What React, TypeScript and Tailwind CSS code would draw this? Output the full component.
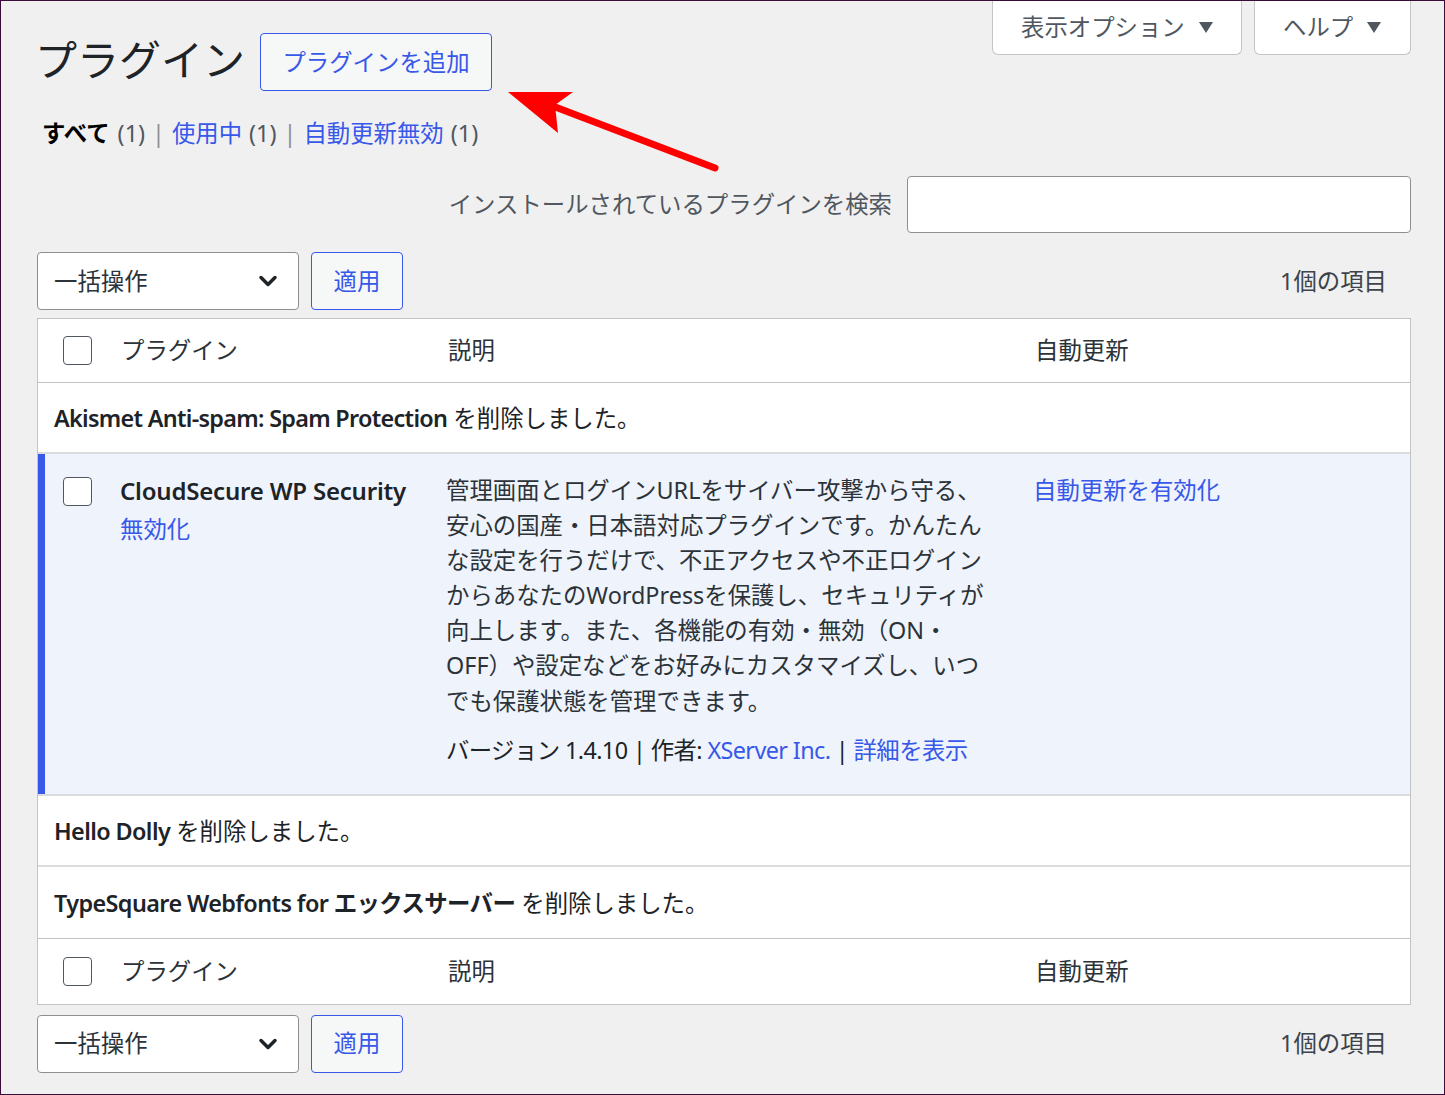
import { ChevronDown } from "lucide-react"

const blue = "text-[#3858e9]"

function Caret() {
  return (
    <svg width="14" height="11" viewBox="0 0 14 11" className="shrink-0">
      <path d="M0 0 H14 L7 11 Z" fill="#50575e" />
    </svg>
  )
}

function Checkbox() {
  return <span className="block h-[29px] w-[29px] rounded-[4px] border border-[#50575e] bg-white" />
}

function BulkBar() {
  return (
    <div className="flex items-center justify-between">
      <div className="flex items-center gap-[12px]">
        <div className="flex h-[58px] w-[262px] items-center justify-between rounded-[4px] border border-[#8c8f94] bg-white pl-[16px] pr-[16px] text-[#2c3338]">
          <span>一括操作</span>
          <ChevronDown size={28} strokeWidth={3} className="text-[#1d2327]" />
        </div>
        <button
          type="button"
          className={`h-[58px] w-[92px] rounded-[4px] border border-[#3858e9] bg-[#f6f7f7] ${blue}`}
        >
          適用
        </button>
      </div>
      <span className="pr-[24px] text-[#3c434a]">1個の項目</span>
    </div>
  )
}

function HeadRow({ bottom }: { bottom?: boolean }) {
  return (
    <div
      className={`grid h-[64px] grid-cols-[83px_327px_587px_1fr] items-center text-[#2c3338] ${
        bottom ? "h-[65px]" : "border-b border-[#c3c4c7]"
      }`}
    >
      <div className="pl-[25px]">
        <Checkbox />
      </div>
      <span>プラグイン</span>
      <span>説明</span>
      <span>自動更新</span>
    </div>
  )
}

function Deleted({ children, last }: { children: React.ReactNode; last?: boolean }) {
  return (
    <div
      className={`flex items-center px-[16px] text-[#1d2327] ${
        last ? "h-[72px] border-b border-[#c3c4c7]" : "h-[71px] border-b-2 border-[#dcdcde]"
      }`}
    >
      <p className="pt-[2px]">{children}</p>
    </div>
  )
}

export default function App() {
  return (
    <div className="relative h-[1095px] w-[1445px] overflow-hidden border border-[#3b0b3b] bg-[#f0f0f1] font-['Noto_Sans','Noto_Sans_CJK_JP',sans-serif] text-[23.4px] leading-[35px]">
      {/* annotation arrow */}
      <svg
        width="230"
        height="100"
        viewBox="0 0 230 100"
        className="pointer-events-none absolute left-[499px] top-[79px]"
      >
        <polygon points="8,12 73,12 55,25 58,53" fill="#ff0000" />
        <line x1="50" y1="25" x2="215" y2="88" stroke="#ff0000" strokeWidth="7" strokeLinecap="round" />
      </svg>

      <div className="pl-[36px] pr-[33px]">
        {/* header */}
        <div className="flex items-start justify-between">
          <div className="flex items-center gap-[15px] pt-[32px]">
            <h1 className="-mt-[4px] -ml-[2px] text-[42px] leading-[54px] text-[#1d2327]">プラグイン</h1>
            <button
              type="button"
              className={`h-[58px] w-[232px] rounded-[4px] border border-[#3858e9] bg-[#f6f7f7] ${blue}`}
            >
              プラグインを追加
            </button>
          </div>
          <div className="flex gap-[12px] text-[#50575e]">
            <div className="flex h-[54px] w-[250px] items-center gap-[14px] rounded-b-[6px] border-x border-b border-[#c3c4c7] bg-white pl-[28px]">
              表示オプション
              <Caret />
            </div>
            <div className="flex h-[54px] w-[157px] items-center gap-[14px] rounded-b-[6px] border-x border-b border-[#c3c4c7] bg-white pl-[28px]">
              ヘルプ
              <Caret />
            </div>
          </div>
        </div>

        {/* filters */}
        <div className="mt-[25px] flex items-center pl-[5px]">
          <span className="font-bold text-black">すべて</span>
          <span className="ml-[8px] text-[#50575e]">(1)</span>
          <span className="mx-[7px] text-[#8c8f94]">|</span>
          <span className={blue}>使用中</span>
          <span className="ml-[7px] text-[#50575e]">(1)</span>
          <span className="mx-[7px] text-[#8c8f94]">|</span>
          <span className={blue}>自動更新無効</span>
          <span className="ml-[7px] text-[#50575e]">(1)</span>
        </div>

        {/* search */}
        <div className="mt-[25px] flex items-center justify-end gap-[15px]">
          <label className="text-[#50575e]">インストールされているプラグインを検索</label>
          <input className="h-[57px] w-[504px] rounded-[4px] border border-[#8c8f94] bg-white" />
        </div>

        <div className="mt-[19px]">
          <BulkBar />
        </div>

        {/* table */}
        <div className="mt-[8px] border border-[#c3c4c7] bg-white">
          <HeadRow />
          <Deleted>
            <b className="font-semibold tracking-[-0.7px]">Akismet Anti-spam: Spam Protection</b> を削除しました。
          </Deleted>

          <div className="grid grid-cols-[83px_327px_587px_1fr] items-start border-b-2 border-[#dcdcde] bg-[#eff3fc] pb-[26px] pt-[19px] shadow-[inset_7px_0_0_#3858e9]">
            <div className="mt-[4px] pl-[25px]">
              <Checkbox />
            </div>
            <div>
              <p className="-ml-[1px] text-[24px] font-semibold tracking-[-0.2px] text-[#1d2327]">CloudSecure WP Security</p>
              <p className={`-ml-[1px] mt-[4px] ${blue}`}>無効化</p>
            </div>
            <div className="-ml-[2px] text-[#2c3338]">
              <p className="leading-[35.1px]">
                管理画面とログインURLをサイバー攻撃から守る、
                <br />
                安心の国産・日本語対応プラグインです。かんたん
                <br />
                な設定を行うだけで、不正アクセスや不正ログイン
                <br />
                からあなたのWordPressを保護し、セキュリティが
                <br />
                向上します。また、各機能の有効・無効（ON・
                <br />
                OFF）や設定などをお好みにカスタマイズし、いつ
                <br />
                でも保護状態を管理できます。
              </p>
              <p className="mt-[14px] tracking-[-0.6px] text-[#1d2327]">
                バージョン 1.4.10 | 作者: <span className={blue}>XServer Inc.</span> |{" "}
                <span className={blue}>詳細を表示</span>
              </p>
            </div>
            <p className={`-ml-[2px] ${blue}`}>自動更新を有効化</p>
          </div>

          <Deleted>
            <b className="font-semibold tracking-[-0.6px]">Hello Dolly</b> を削除しました。
          </Deleted>
          <Deleted last>
            <b className="font-semibold tracking-[-0.6px]">TypeSquare Webfonts for エックスサーバー</b> を削除しました。
          </Deleted>
          <HeadRow bottom />
        </div>

        <div className="mt-[10px]">
          <BulkBar />
        </div>
      </div>
    </div>
  )
}
